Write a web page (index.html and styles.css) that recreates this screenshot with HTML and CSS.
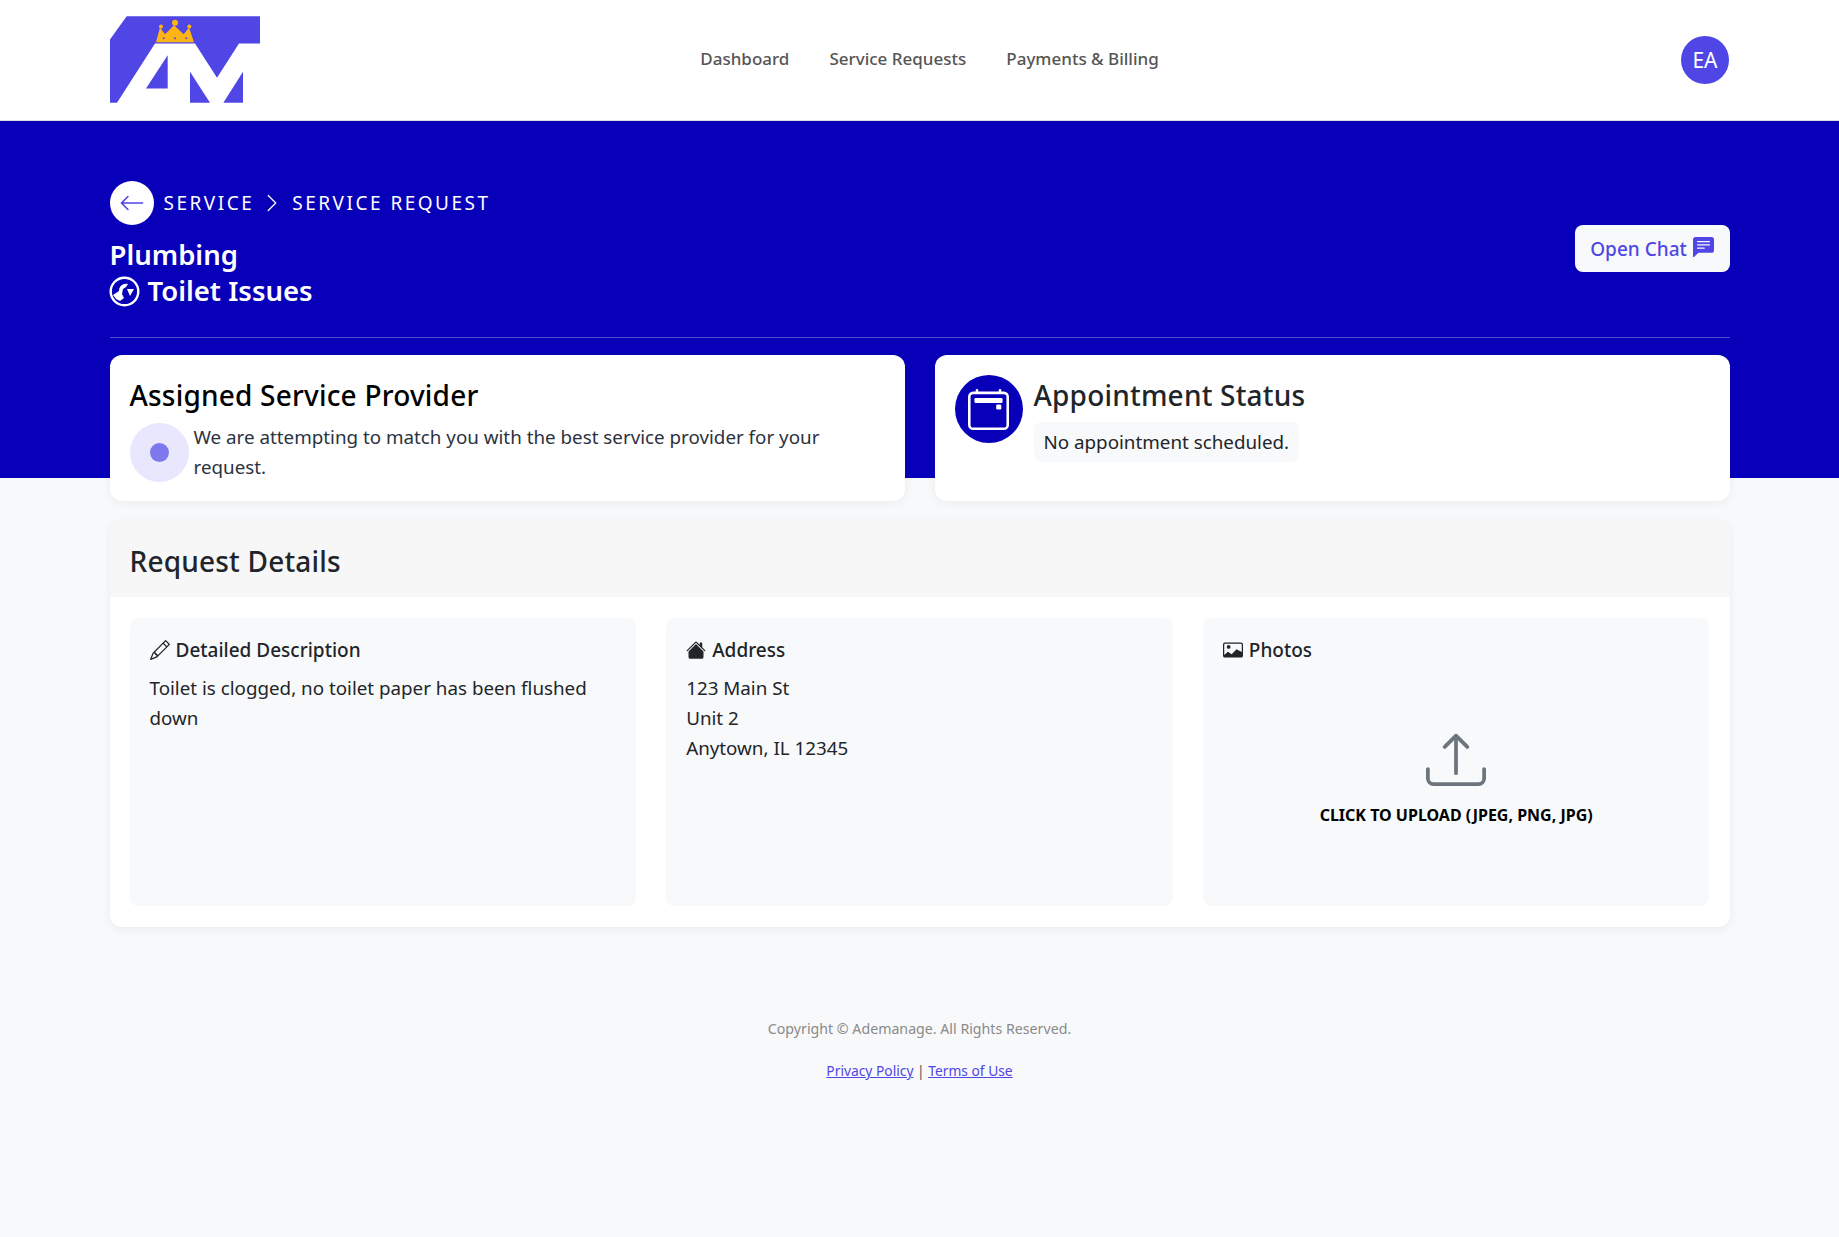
FILE: index.html
```html
<!DOCTYPE html>
<html lang="en">
<head>
    <meta charset="UTF-8">
    <meta name="viewport" content="width=device-width, initial-scale=1.0">
    <title>Service Request</title>
    <link rel="stylesheet" href="styles.css">
</head>
<body>
    <header class="topbar">
        <a class="logo" href="#">
            <svg class="logo-mark" viewBox="15 18 450 260">
                <path class="logo-blue" d="M15 88 65 18H465V100H402L336 203 270 100H150L36 278H15Z"/>
                <path class="logo-blue" d="M188 135V235H123Z"/>
                <path class="logo-blue" d="M255 185 315 278H255Z"/>
                <path class="logo-blue" d="M414 185V278H355Z"/>
                <path class="logo-crown" d="M153 96 165 52 180 72 207 45 236 72 252 52 267 96Z"/>
                <circle class="logo-crown" cx="168" cy="49" r="6"/>
                <circle class="logo-crown" cx="210" cy="38" r="9"/>
                <circle class="logo-crown" cx="253" cy="49" r="6"/>
                <circle class="logo-blue" cx="176" cy="84" r="3"/>
                <circle class="logo-blue" cx="210" cy="84" r="3"/>
                <circle class="logo-blue" cx="244" cy="84" r="3"/>
            </svg>
        </a>
        <nav class="main-nav">
            <a href="#">Dashboard</a>
            <a href="#">Service Requests</a>
            <a href="#">Payments &amp; Billing</a>
        </nav>
        <div class="avatar">EA</div>
    </header>

    <section class="hero">
        <div class="wrap">
            <div class="hero-top">
                <div>
                    <div class="crumbs">
                        <a class="back" href="#">
                            <svg width="26" height="26" viewBox="0 0 16 16" fill="currentColor"><path fill-rule="evenodd" d="M15 8a.5.5 0 0 0-.5-.5H2.707l3.147-3.146a.5.5 0 1 0-.708-.708l-4 4a.5.5 0 0 0 0 .708l4 4a.5.5 0 0 0 .708-.708L2.707 8.5H14.5A.5.5 0 0 0 15 8z"/></svg>
                        </a>
                        <span>SERVICE</span>
                        <svg class="crumb-sep" width="20" height="20" viewBox="0 0 16 16" fill="currentColor"><path fill-rule="evenodd" d="M4.646 1.646a.5.5 0 0 1 .708 0l6 6a.5.5 0 0 1 0 .708l-6 6a.5.5 0 0 1-.708-.708L10.293 8 4.646 2.354a.5.5 0 0 1 0-.708z"/></svg>
                        <span>SERVICE REQUEST</span>
                    </div>
                    <h1 class="hero-title">Plumbing</h1>
                    <h1 class="hero-title hero-sub">
                        <svg class="trade-icon" width="31" height="31" viewBox="0 0 31 31">
                            <circle cx="15.5" cy="15.5" r="13.8" fill="none" stroke="#fff" stroke-width="2.4"/>
                            <path fill="#fff" d="M4 19 10 15C10 10 14 7 19 8L17 11 14 13 13 18 15 22 11 25 7 23ZM18 13 25 13 21 20Z"/>
                        </svg>
                        Toilet Issues
                    </h1>
                </div>
                <a class="chat-btn" href="#">
                    Open Chat
                    <svg width="21" height="21" viewBox="0 0 16 16" fill="currentColor"><path d="M0 2a2 2 0 0 1 2-2h12a2 2 0 0 1 2 2v8a2 2 0 0 1-2 2H4.414a1 1 0 0 0-.707.293L.854 15.146A.5.5 0 0 1 0 14.793V2zm3.5 1a.5.5 0 0 0 0 1h9a.5.5 0 0 0 0-1h-9zm0 2.5a.5.5 0 0 0 0 1h9a.5.5 0 0 0 0-1h-9zm0 2.5a.5.5 0 0 0 0 1h5a.5.5 0 0 0 0-1h-5z"/></svg>
                </a>
            </div>

            <div class="status-row">
                <div class="card status-card">
                    <h2 class="card-title">Assigned Service Provider</h2>
                    <div class="provider">
                        <div class="pulse"><span></span></div>
                        <p>We are attempting to match you with the best service provider for your request.</p>
                    </div>
                </div>
                <div class="card status-card appointment">
                    <div class="cal-icon">
                        <svg width="41" height="41" viewBox="0 0 16 16" fill="currentColor">
                            <path d="M11 6.5a.5.5 0 0 1 .5-.5h1a.5.5 0 0 1 .5.5v1a.5.5 0 0 1-.5.5h-1a.5.5 0 0 1-.5-.5v-1z"/>
                            <path d="M3.5 0a.5.5 0 0 1 .5.5V1h8V.5a.5.5 0 0 1 1 0V1h1a2 2 0 0 1 2 2v11a2 2 0 0 1-2 2H2a2 2 0 0 1-2-2V3a2 2 0 0 1 2-2h1V.5a.5.5 0 0 1 .5-.5zM2 2a1 1 0 0 0-1 1v11a1 1 0 0 0 1 1h12a1 1 0 0 0 1-1V3a1 1 0 0 0-1-1H2z"/>
                            <path d="M2.5 4a.5.5 0 0 1 .5-.5h10a.5.5 0 0 1 .5.5v1a.5.5 0 0 1-.5.5H3a.5.5 0 0 1-.5-.5V4z"/>
                        </svg>
                    </div>
                    <div>
                        <h2 class="card-title dark">Appointment Status</h2>
                        <div class="pill">No appointment scheduled.</div>
                    </div>
                </div>
            </div>
        </div>
    </section>

    <main class="wrap">
        <div class="card details">
            <div class="details-head">
                <h2 class="card-title dark">Request Details</h2>
            </div>
            <div class="details-body">
                <div class="info-box">
                    <h3 class="info-head">
                        <svg width="20" height="20" viewBox="0 0 16 16" fill="currentColor"><path d="M12.146.146a.5.5 0 0 1 .708 0l3 3a.5.5 0 0 1 0 .708l-10 10a.5.5 0 0 1-.168.11l-5 2a.5.5 0 0 1-.65-.65l2-5a.5.5 0 0 1 .11-.168l10-10zM11.207 2.5 13.5 4.793 14.793 3.5 12.5 1.207 11.207 2.5zm1.586 3L10.5 3.207 4 9.707V10h.5a.5.5 0 0 1 .5.5v.5h.5a.5.5 0 0 1 .5.5v.5h.293l6.5-6.5zm-9.761 5.175-.106.106-1.528 3.821 3.821-1.528.106-.106A.5.5 0 0 1 5 12.5V12h-.5a.5.5 0 0 1-.5-.5V11h-.5a.5.5 0 0 1-.468-.325z"/></svg>
                        Detailed Description
                    </h3>
                    <p>Toilet is clogged, no toilet paper has been flushed down</p>
                </div>
                <div class="info-box">
                    <h3 class="info-head">
                        <svg width="20" height="20" viewBox="0 0 16 16" fill="currentColor"><path d="M8.707 1.5a1 1 0 0 0-1.414 0L.646 8.146a.5.5 0 0 0 .708.708L8 2.207l6.646 6.647a.5.5 0 0 0 .708-.708L13 5.793V2.5a.5.5 0 0 0-.5-.5h-1a.5.5 0 0 0-.5.5v1.293L8.707 1.5Z"/><path d="m8 3.293 6 6V13.5a1.5 1.5 0 0 1-1.5 1.5h-9A1.5 1.5 0 0 1 2 13.5V9.293l6-6Z"/></svg>
                        Address
                    </h3>
                    <p>123 Main St<br>Unit 2<br>Anytown, IL 12345</p>
                </div>
                <div class="info-box">
                    <h3 class="info-head">
                        <svg width="20" height="20" viewBox="0 0 16 16" fill="currentColor"><path d="M6.002 5.5a1.5 1.5 0 1 1-3 0 1.5 1.5 0 0 1 3 0z"/><path d="M1.5 2A1.5 1.5 0 0 0 0 3.5v9A1.5 1.5 0 0 0 1.5 14h13a1.5 1.5 0 0 0 1.5-1.5v-9A1.5 1.5 0 0 0 14.5 2h-13zm13 1a.5.5 0 0 1 .5.5v6l-3.775-1.947a.5.5 0 0 0-.577.093l-3.71 3.71-2.66-1.772a.5.5 0 0 0-.63.062L1.002 12v.54A.505.505 0 0 1 1 12.5v-9a.5.5 0 0 1 .5-.5h13z"/></svg>
                        Photos
                    </h3>
                    <div class="upload">
                        <svg class="upload-icon" width="60" height="60" viewBox="0 0 16 16" fill="currentColor"><path d="M.5 9.9a.5.5 0 0 1 .5.5v2.5a1 1 0 0 0 1 1h12a1 1 0 0 0 1-1v-2.5a.5.5 0 0 1 1 0v2.5a2 2 0 0 1-2 2H2a2 2 0 0 1-2-2v-2.5a.5.5 0 0 1 .5-.5z"/><path d="M7.646 1.146a.5.5 0 0 1 .708 0l3 3a.5.5 0 0 1-.708.708L8.5 2.707V11.5a.5.5 0 0 1-1 0V2.707L5.354 4.854a.5.5 0 1 1-.708-.708l3-3z"/></svg>
                        <span class="upload-label">CLICK TO UPLOAD (JPEG, PNG, JPG)</span>
                    </div>
                </div>
            </div>
        </div>
    </main>

    <footer class="footer">
        <p>Copyright © Ademanage. All Rights Reserved.</p>
        <p class="footer-links"><a href="#">Privacy Policy</a> | <a href="#">Terms of Use</a></p>
    </footer>
</body>
</html>
```

FILE: styles.css
```css
* {
    box-sizing: border-box;
}
body {
    margin: 0;
    min-height: 1237px;
    font-family: "Noto Sans", "Open Sans", sans-serif;
    font-size: 18.8px;
    line-height: 30px;
    color: #212529;
    background-color: #f8f9fb;
}
h1, h2, h3, p {
    margin: 0;
}
.wrap {
    width: 1620px;
    margin: 0 auto;
}
.topbar {
    height: 121px;
    padding: 16px 110px 0;
    display: flex;
    justify-content: space-between;
    align-items: flex-start;
    background-color: white;
    border-bottom: 1px solid #dcdcdc;
}
.logo-mark {
    display: block;
    width: 150px;
    height: 87px;
}
.logo-blue {
    fill: #4f46e5;
}
.logo-crown {
    fill: #fdb515;
}
.main-nav {
    display: flex;
    gap: 40px;
    margin: 28px 82px 0 0;
}
.main-nav a {
    color: #555;
    font-size: 17px;
    font-weight: 500;
    text-decoration: none;
}
.avatar {
    width: 48px;
    height: 48px;
    margin-top: 20px;
    border-radius: 50%;
    display: flex;
    align-items: center;
    justify-content: center;
    background-color: #4f46e5;
    color: white;
    font-size: 21px;
}
.hero {
    height: 357px;
    padding-top: 60px;
    background-color: #0800b9;
}
.hero-top {
    height: 157px;
    padding-bottom: 22px;
    display: flex;
    justify-content: space-between;
    align-items: flex-start;
    border-bottom: 1px solid rgba(255,255,255,0.3);
}
.crumbs {
    display: flex;
    align-items: center;
    color: white;
    font-size: 19px;
    letter-spacing: 2.5px;
}
.back {
    width: 44px;
    height: 44px;
    margin-right: 10px;
    border-radius: 50%;
    display: flex;
    align-items: center;
    justify-content: center;
    background-color: white;
    color: #4f46e5;
}
.crumb-sep {
    margin: 0 10px 0 8px;
}
.hero-title {
    color: white;
    font-size: 27.5px;
    font-weight: 600;
    line-height: 36px;
}
.crumbs + .hero-title {
    margin-top: 12px;
}
.hero-sub {
    display: flex;
    align-items: center;
    gap: 8px;
}
.trade-icon {
    margin-left: -1px;
}
.chat-btn {
    width: 155px;
    height: 47px;
    padding-top: 2px;
    align-self: center;
    display: flex;
    align-items: center;
    justify-content: center;
    gap: 6px;
    border-radius: 8px;
    background-color: #f8f9fb;
    color: #4f46e5;
    font-size: 19px;
    font-weight: 500;
    text-decoration: none;
}
.chat-btn svg {
    margin-top: -4px;
}
.card {
    background-color: white;
    border-radius: 12px;
    box-shadow: 0 2px 10px rgba(0,0,0,0.06);
}
.status-row {
    display: grid;
    grid-template-columns: 1fr 1fr;
    gap: 30px;
    margin-top: 17px;
}
.status-card {
    height: 146px;
    padding: 20px;
}
.card-title {
    color: black;
    font-size: 28px;
    font-weight: 500;
    letter-spacing: 0.2px;
    line-height: 40px;
}
.card-title.dark {
    color: #212529;
}
.provider {
    display: flex;
    align-items: center;
    gap: 5px;
    margin-top: 7px;
}
.provider p {
    color: #2b3240;
}
.pulse {
    flex: none;
    width: 59px;
    height: 59px;
    border-radius: 50%;
    display: flex;
    align-items: center;
    justify-content: center;
    background-color: #e9e7fd;
}
.pulse span {
    width: 19px;
    height: 19px;
    border-radius: 50%;
    background-color: #7f77ee;
}
.appointment {
    display: flex;
    gap: 11px;
}
.cal-icon {
    flex: none;
    width: 68px;
    height: 68px;
    border-radius: 50%;
    display: flex;
    align-items: center;
    justify-content: center;
    background-color: #0800b9;
    color: white;
}
.pill {
    display: inline-block;
    height: 40px;
    margin-top: 7px;
    padding: 5px 10px;
    border-radius: 8px;
    background-color: #f8f9fa;
}
.details {
    height: 406px;
    margin-top: 43px;
    overflow: hidden;
}
.details-head {
    height: 76px;
    padding: 20px;
    background-color: #f7f7f7;
}
.details-body {
    display: grid;
    grid-template-columns: repeat(3, 1fr);
    gap: 30px;
    height: 330px;
    padding: 21px 20px;
}
.info-box {
    padding: 17px 20px;
    border-radius: 8px;
    background-color: #f8f9fb;
}
.info-head {
    display: flex;
    align-items: center;
    gap: 6px;
    margin-bottom: 8px;
    font-size: 19px;
    font-weight: 500;
    line-height: 30px;
}
.upload {
    display: flex;
    flex-direction: column;
    align-items: center;
    margin-top: 65px;
}
.upload-icon {
    color: #6c757d;
}
.upload-label {
    margin-top: 13px;
    color: black;
    font-size: 16px;
    font-weight: 700;
    line-height: 24px;
}
.footer {
    margin-top: 87px;
    text-align: center;
    color: #8a8a8a;
    font-size: 14.2px;
    line-height: 30px;
}
.footer-links {
    margin-top: 12px;
    color: #555;
    font-size: 13.8px;
}
.footer-links a {
    color: #4f46e5;
}
```
